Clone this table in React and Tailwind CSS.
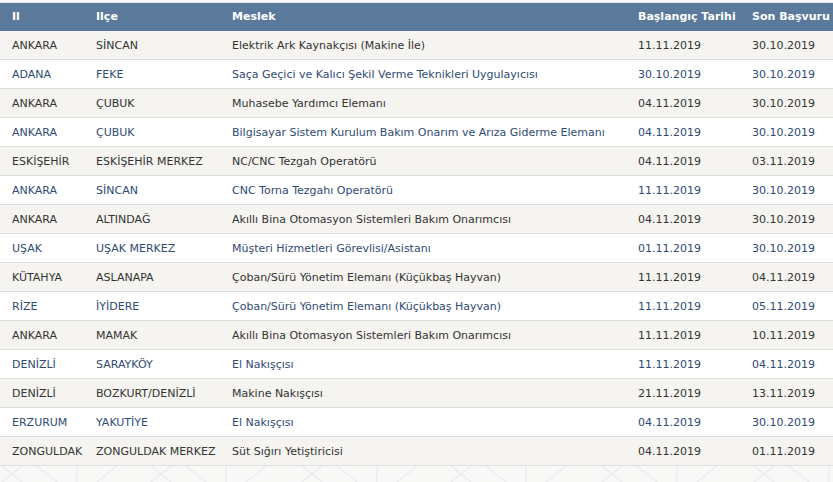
import React from "react";

const rows = [
  ["ANKARA", "SİNCAN", "Elektrik Ark Kaynakçısı (Makine İle)", "11.11.2019", "30.10.2019"],
  ["ADANA", "FEKE", "Saça Geçici ve Kalıcı Şekil Verme Teknikleri Uygulayıcısı", "30.10.2019", "30.10.2019"],
  ["ANKARA", "ÇUBUK", "Muhasebe Yardımcı Elemanı", "04.11.2019", "30.10.2019"],
  ["ANKARA", "ÇUBUK", "Bilgisayar Sistem Kurulum Bakım Onarım ve Arıza Giderme Elemanı", "04.11.2019", "30.10.2019"],
  ["ESKİŞEHİR", "ESKİŞEHİR MERKEZ", "NC/CNC Tezgah Operatörü", "04.11.2019", "03.11.2019"],
  ["ANKARA", "SİNCAN", "CNC Torna Tezgahı Operatörü", "11.11.2019", "30.10.2019"],
  ["ANKARA", "ALTINDAĞ", "Akıllı Bina Otomasyon Sistemleri Bakım Onarımcısı", "04.11.2019", "30.10.2019"],
  ["UŞAK", "UŞAK MERKEZ", "Müşteri Hizmetleri Görevlisi/Asistanı", "01.11.2019", "30.10.2019"],
  ["KÜTAHYA", "ASLANAPA", "Çoban/Sürü Yönetim Elemanı (Küçükbaş Hayvan)", "11.11.2019", "04.11.2019"],
  ["RİZE", "İYİDERE", "Çoban/Sürü Yönetim Elemanı (Küçükbaş Hayvan)", "11.11.2019", "05.11.2019"],
  ["ANKARA", "MAMAK", "Akıllı Bina Otomasyon Sistemleri Bakım Onarımcısı", "11.11.2019", "10.11.2019"],
  ["DENİZLİ", "SARAYKÖY", "El Nakışçısı", "11.11.2019", "04.11.2019"],
  ["DENİZLİ", "BOZKURT/DENİZLİ", "Makine Nakışçısı", "21.11.2019", "13.11.2019"],
  ["ERZURUM", "YAKUTİYE", "El Nakışçısı", "04.11.2019", "30.10.2019"],
  ["ZONGULDAK", "ZONGULDAK MERKEZ", "Süt Sığırı Yetiştiricisi", "04.11.2019", "01.11.2019"],
];

const headers = ["Il", "Ilçe", "Meslek", "Başlangıç Tarihi", "Son Başvuru"];
const cols = "grid grid-cols-[84px_136px_406px_114px_1fr]";

function Pattern() {
  const posts = [77, 226, 377, 526, 677, 829];
  return (
    <svg width="833" height="16" className="block">
      {posts.map((x) => (
        <g key={x} stroke="#ececec" strokeWidth="1.5" fill="none">
          <line x1={x} y1="0" x2={x} y2="16" />
          <line x1={x - 40} y1="0" x2={x - 20} y2="16" />
          <line x1={x + 40} y1="0" x2={x + 20} y2="16" />
          <line x1={x - 75} y1="0" x2={x - 55} y2="16" />
          <line x1={x - 55} y1="0" x2={x - 75} y2="16" />
        </g>
      ))}
    </svg>
  );
}

export default function App() {
  return (
    <div
      className="w-[833px] h-[482px] bg-[#f8f8f7] overflow-hidden text-[11px]"
      style={{ fontFamily: "'DejaVu Sans', Verdana, sans-serif" }}
    >
      <div className="h-[3px] border-b border-[#e2e2e2]" />
      <div className={`${cols} h-[28px] items-center bg-[#5b7a9b] text-white font-bold`}>
        {headers.map((h) => (
          <div key={h} className="pl-3 pt-px whitespace-nowrap">{h}</div>
        ))}
      </div>
      {rows.map((r, i) => (
        <div
          key={i}
          className={`${cols} h-[29px] items-center border-b border-[#dedede] ${
            i % 2 === 0 ? "bg-[#f5f4f0] text-[#333333]" : "bg-white text-[#2e4b73]"
          }`}
        >
          {r.map((c, j) => (
            <div key={j} className="pl-3 pt-[2px] whitespace-nowrap">{c}</div>
          ))}
        </div>
      ))}
      <Pattern />
    </div>
  );
}
